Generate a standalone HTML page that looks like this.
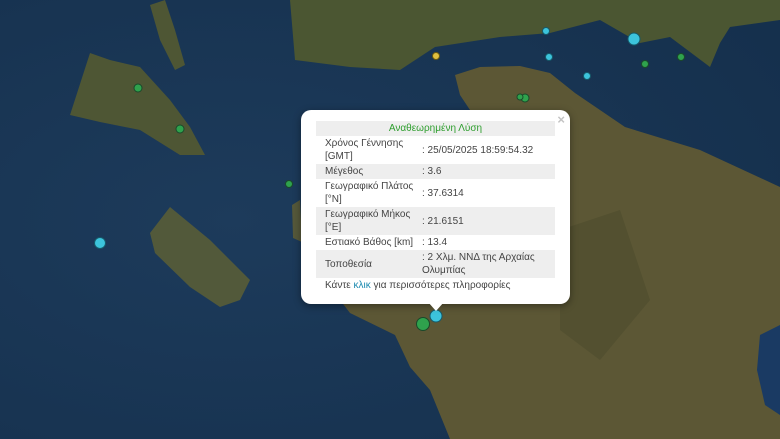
<!DOCTYPE html>
<html><head><meta charset="utf-8"><style>
html,body{margin:0;padding:0;width:780px;height:439px;overflow:hidden;background:#1a3656;font-family:"Liberation Sans","DejaVu Sans",sans-serif}
svg.map{position:absolute;left:0;top:0}
.pop{position:absolute;left:301px;top:110px;width:269px;height:194px;background:#fff;border-radius:10px;box-shadow:0 2px 8px rgba(0,0,0,.4)}
.tip{position:absolute;left:428px;top:302px;width:0;height:0;border-left:8px solid transparent;border-right:8px solid transparent;border-top:9px solid #fff}
.x{position:absolute;right:5px;top:2px;color:#c3c3c3;font-size:13px;font-weight:bold}
table{position:absolute;left:15px;top:11px;width:239px;border-collapse:collapse;font-size:10px;color:#444;line-height:13px}
td{padding:1px 0 1px 9px;vertical-align:middle}
td.l{width:97px}
tr.g td{background:#eeeeee}
td.v{padding-left:0}
.h td{text-align:center;color:#2e9e2e;background:#eeeeee;padding:1px 0}
.f{position:absolute;left:24px;top:170px;font-size:10px;color:#444}
.f span{color:#1c8ab0}
</style></head><body>
<svg class="map" width="780" height="439" viewBox="0 0 780 439">
<defs>
<radialGradient id="sea" cx="0.3" cy="0.5" r="0.8"><stop offset="0" stop-color="#1d3b5b"/><stop offset="1" stop-color="#15304d"/></radialGradient>
</defs>
<rect width="780" height="439" fill="url(#sea)"/>
<path d="M290,0 L780,0 L780,20 L730,27 L720,43 L710,67 L670,37 L640,43 L600,20 L550,33 L500,37 L435,47 L400,70 L350,67 L295,60 Z" fill="#4b5632"/>
<path d="M455,75 L480,67 L520,66 L550,73 L575,93 L625,127 L700,150 L780,187 L780,439 L450,439 L430,390 L410,367 L395,335 L350,313 L340,300 L420,304 L470,110 L460,95 Z" fill="#5c5735"/>
<path d="M760,335 L780,325 L780,415 L765,405 L757,370 Z" fill="#1a3a63"/>
<path d="M70,115 L90,53 L110,60 L140,67 L170,100 L190,127 L205,155 L180,155 L140,130 L100,122 Z" fill="#4e5634"/>
<path d="M150,5 L165,0 L175,30 L185,65 L175,70 L160,40 Z" fill="#4e5634"/>
<path d="M155,253 L150,233 L170,207 L210,240 L250,280 L240,300 L220,307 L190,287 Z" fill="#52593a"/>
<path d="M292,205 L300,200 L302,242 L293,238 Z" fill="#55583a"/>
<path d="M560,230 L620,210 L650,300 L600,360 L560,330 Z" fill="#4a4a2c" opacity=".5"/>
</svg>
<svg class="map" width="780" height="439" viewBox="0 0 780 439">
<g stroke="#1a4a2a" stroke-width="1">
<circle cx="138" cy="88" r="4" fill="#2fa24d"/>
<circle cx="180" cy="129" r="4" fill="#2fa24d"/>
<circle cx="289" cy="184" r="3.5" fill="#2fa24d"/>
<circle cx="525" cy="98" r="4" fill="#2fa24d"/>
<circle cx="520" cy="97" r="3" fill="#2fa24d"/>
<circle cx="645" cy="64" r="3.5" fill="#2fa24d"/>
<circle cx="681" cy="57" r="3.5" fill="#2fa24d"/>
<circle cx="423" cy="324" r="6.5" fill="#2fa24d"/>
</g>
<g stroke="#165a6a" stroke-width="1">
<circle cx="100" cy="243" r="5.5" fill="#3cc4dc"/>
<circle cx="546" cy="31" r="3.5" fill="#3cc4dc"/>
<circle cx="634" cy="39" r="6" fill="#3cc4dc"/>
<circle cx="549" cy="57" r="3.5" fill="#3cc4dc"/>
<circle cx="587" cy="76" r="3.5" fill="#3cc4dc"/>
<circle cx="436" cy="316" r="6" fill="#3cc4dc"/>
</g>
<circle cx="436" cy="56" r="3.5" fill="#e0c040" stroke="#6a5a10"/>
</svg>
<div class="pop">
<div class="x">×</div>
<table>
<tr class="h"><td colspan="2">Αναθεωρημένη Λύση</td></tr>
<tr><td class="l">Χρόνος Γέννησης<br>[GMT]</td><td class="v">: 25/05/2025 18:59:54.32</td></tr>
<tr class="g"><td class="l">Μέγεθος</td><td class="v">: 3.6</td></tr>
<tr><td class="l">Γεωγραφικό Πλάτος<br>[°N]</td><td class="v">: 37.6314</td></tr>
<tr class="g"><td class="l">Γεωγραφικό Μήκος<br>[°E]</td><td class="v">: 21.6151</td></tr>
<tr><td class="l">Εστιακό Βάθος [km]</td><td class="v">: 13.4</td></tr>
<tr class="g"><td class="l">Τοποθεσία</td><td class="v">: 2 Χλμ. ΝΝΔ της Αρχαίας<br>Ολυμπίας</td></tr>
</table>
<div class="f">Κάντε <span>κλικ</span> για περισσότερες πληροφορίες</div>
</div>
<div class="tip"></div>
</body></html>
